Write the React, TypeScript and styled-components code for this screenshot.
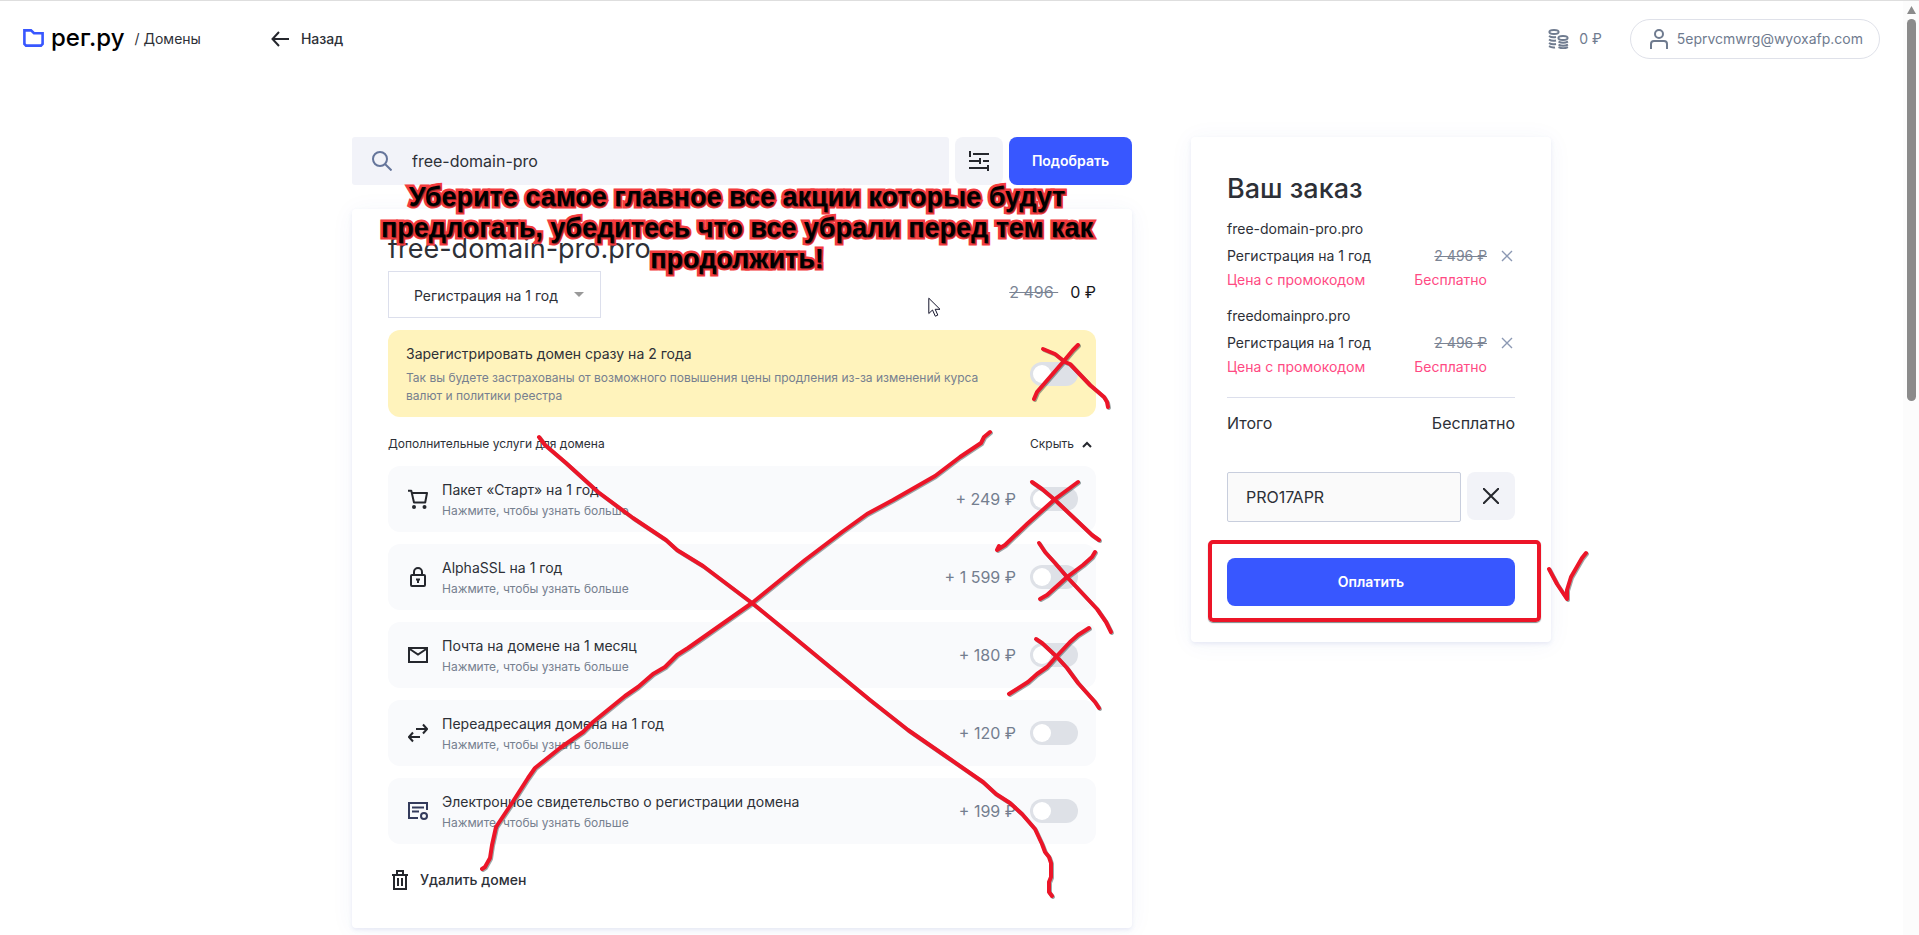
import React, { useState } from 'react';
import styled, { createGlobalStyle } from 'styled-components';

const GlobalStyle = createGlobalStyle`
  *, *::before, *::after { box-sizing: border-box; }
  body {
    margin: 0;
    background: #fff;
    color: #2d3037;
    font-family: Inter, "Liberation Sans", sans-serif;
    font-size: 14px;
    line-height: 20px;
    overflow: hidden;
  }
  h1, h2, p { margin: 0; font-weight: 400; }
  button, input, select { font: inherit; color: inherit; margin: 0; }
  button { border: 0; padding: 0; background: none; cursor: pointer; }
  a { color: inherit; text-decoration: none; }
  svg { display: block; flex: none; }
`;

const Window = styled.div`
  display: flex;
  height: 100vh;
  border-top: 1px solid #dedede;
`;
const Page = styled.div`
  flex: 1;
  min-width: 0;
  overflow: hidden;
`;
const ScrollTrack = styled.div`
  display: flex;
  flex-direction: column;
  align-items: center;
  gap: 5px;
  width: 16px;
  padding-top: 5px;
  background: #fcfcfc;
`;
const ScrollThumb = styled.div`
  width: 9px;
  height: 382px;
  border-radius: 5px;
  background: #8b8b8b;
`;

const Header = styled.header`
  display: flex;
  align-items: center;
  height: 76px;
  padding: 0 23px;
`;
const Logo = styled.a`
  display: flex;
  align-items: center;
  gap: 7px;
  padding-bottom: 2px;
  color: #000;
  font-size: 24px;
  line-height: 28px;
  font-weight: 500;
`;
const Section = styled.a`
  margin-left: 10px;
`;
const Back = styled.a`
  display: flex;
  align-items: center;
  gap: 12px;
  margin-left: 70px;
  font-weight: 500;
`;
const Balance = styled.a`
  display: flex;
  align-items: center;
  gap: 10px;
  margin-left: auto;
  color: #6f7b8f;
`;
const Account = styled.a`
  display: flex;
  align-items: center;
  gap: 8px;
  height: 40px;
  margin-left: 28px;
  padding: 0 16px 0 18px;
  border: 1px solid #dfe1e9;
  border-radius: 20px;
  color: #6f7b8f;
`;

const Content = styled.main`
  position: relative;
  display: flex;
  align-items: flex-start;
  gap: 59px;
  max-width: 1199px;
  margin: 60px auto 0;
`;
const Results = styled.div`
  flex: 1;
  min-width: 0;
`;
const Search = styled.form`
  display: flex;
  gap: 6px;
  height: 48px;
`;
const SearchField = styled.label`
  display: flex;
  flex: 1;
  align-items: center;
  gap: 20px;
  padding: 0 20px;
  border-radius: 3px;
  background: #f2f3f9;
`;
const SearchInput = styled.input`
  flex: 1;
  min-width: 0;
  padding: 0;
  border: 0;
  outline: 0;
  background: none;
  font-size: 16px;
`;
const SquareButton = styled.button`
  display: flex;
  align-items: center;
  justify-content: center;
  width: 48px;
  height: 48px;
  border-radius: 8px;
  background: #f2f3f8;
`;
const PrimaryButton = styled.button<{ $wide?: boolean }>`
  width: ${p => (p.$wide ? '100%' : '123px')};
  height: 48px;
  border-radius: 8px;
  background: #3857ff;
  color: #fff;
  font-weight: 600;
`;

const Card = styled.section`
  border-radius: 4px;
  background: #fff;
  box-shadow: 0 2px 4px rgba(55, 75, 180, 0.1), 0 2px 24px rgba(55, 75, 180, 0.05);
`;
const DomainCard = styled(Card)`
  margin-top: 24px;
  padding: 22px 36px 28px;
`;
const DomainName = styled.h1`
  font-size: 27px;
  line-height: 36px;
`;
const PeriodRow = styled.div`
  display: flex;
  align-items: center;
  justify-content: space-between;
  margin: 4px 0 12px;
`;
const PeriodField = styled.div`
  display: grid;
  align-items: center;
  width: 213px;

  & > * { grid-area: 1 / 1; }
  & > svg { justify-self: end; margin-right: 17px; pointer-events: none; }
`;
const PeriodSelect = styled.select`
  appearance: none;
  width: 100%;
  height: 47px;
  padding: 2px 40px 0 25px;
  border: 1px solid #dcdfec;
  border-radius: 0;
  background: #fff;
`;
const Price = styled.p`
  display: flex;
  gap: 12px;
  padding-bottom: 6px;
  font-size: 16px;
  color: #17181c;

  s { color: #7b8494; white-space: pre; }
`;

const Promo = styled.label`
  display: flex;
  align-items: center;
  justify-content: space-between;
  padding: 12px 18px;
  border-radius: 12px;
  background: #fff3bc;
`;
const PromoText = styled.span`
  display: grid;
  gap: 3px;
  max-width: 580px;
`;
const Title = styled.span`
  line-height: 24px;
`;
const Note = styled.span`
  color: #76808f;
  font-size: 12px;
  line-height: 18px;
`;
const Toggle = styled.input`
  appearance: none;
  flex: none;
  display: flex;
  align-items: center;
  width: 48px;
  height: 24px;
  margin: 0;
  padding: 0 3px;
  border-radius: 12px;
  background: #dee1e7;
  cursor: pointer;

  &::before {
    content: '';
    width: 18px;
    height: 18px;
    border-radius: 50%;
    background: #fff;
  }
  &:checked { justify-content: flex-end; background: #3857ff; }
`;

const ExtrasHeader = styled.div`
  display: flex;
  align-items: center;
  justify-content: space-between;
  padding: 18px 4px 13px 0;
  font-size: 12px;
  line-height: 18px;
`;
const Collapse = styled.button`
  display: flex;
  align-items: center;
  gap: 8px;
`;
const Services = styled.div`
  display: grid;
  gap: 12px;
`;
const ServiceRow = styled.label`
  display: flex;
  align-items: center;
  gap: 14px;
  height: 66px;
  padding: 0 18px 0 20px;
  border-radius: 12px;
  background: #f9fafc;
`;
const ServiceText = styled.span`
  display: grid;
  flex: 1;
`;
const ServicePrice = styled.span`
  color: #747e8f;
  font-size: 16px;
`;
const Remove = styled.button`
  display: flex;
  align-items: center;
  gap: 11px;
  margin: 26px 0 10px 3px;
  font-weight: 500;
`;

const OrderCard = styled(Card)`
  flex: none;
  width: 360px;
  padding: 36px;
`;
const OrderTitle = styled.h2`
  margin-bottom: 12px;
  font-size: 27px;
  line-height: 32px;
  font-weight: 500;
`;
const OrderItem = styled.div`
  & + & { margin-top: 12px; }
`;
const OrderDomain = styled.p`
  margin-bottom: 3px;
  line-height: 24px;
`;
const OrderLine = styled.p<{ $promo?: boolean }>`
  display: flex;
  align-items: center;
  line-height: 24px;
  color: ${p => (p.$promo ? '#ff4a83' : 'inherit')};
  padding-right: ${p => (p.$promo ? '28px' : '0')};

  & > :nth-child(2) { margin-left: auto; }
  s { color: #7b8494; }
`;
const ItemRemove = styled.button`
  margin: 0 2px 0 14px;
`;
const Total = styled.p`
  display: flex;
  justify-content: space-between;
  margin: 18px 0 36px;
  padding-top: 12px;
  border-top: 1px solid #dcdfec;
  font-size: 16px;
  line-height: 26px;
`;
const Coupon = styled.div`
  display: flex;
  gap: 6px;
  margin-bottom: 36px;
`;
const CouponInput = styled.input`
  flex: 1;
  min-width: 0;
  height: 50px;
  padding: 0 18px;
  border: 1px solid #c8cedd;
  border-radius: 2px;
  background: #fafafa;
  font-size: 16px;
`;

/* Hand-made notes laid over the checkout page */
const Ink = styled.svg`
  position: absolute;
  top: 0;
  left: 0;
  overflow: visible;
  pointer-events: none;
  filter: drop-shadow(1px 1px 0 rgba(40, 60, 60, 0.45));
`;
const Caption = styled.p`
  position: absolute;
  top: 45px;
  left: 0;
  width: 780px;
  padding: 0 24px 0 14px;
  color: #000;
  font-family: "Liberation Sans", Arial, sans-serif;
  font-size: 27px;
  line-height: 31px;
  font-weight: 700;
  text-align: center;
  -webkit-text-stroke: 5px #f33b3e;
  paint-order: stroke fill;
  stroke-linejoin: round;
  text-shadow: 1px 1px 1px rgba(0, 0, 0, 0.5);
  pointer-events: none;
`;
const Frame = styled.div`
  position: absolute;
  right: 10px;
  top: 403px;
  width: 333px;
  height: 82px;
  border: 4px solid #ec1528;
  border-radius: 5px;
  box-shadow: 0 1px 1px rgba(40, 60, 60, 0.6);
  pointer-events: none;
`;
const Pointer = styled.svg`
  position: absolute;
  left: 576px;
  top: 160px;
`;

const strokes = [
  'M539 437L545 445L566 463L598 492L633 518L666 540L677 550L703 566L752 603L790 634L870 700L908 730L947 757L983 782L996 794L1010 803L1022 814L1035 829L1042 844L1045 852L1049 857L1051 863V877L1049 882V892L1052 896',
  'M990 432L984 437L981 443L960 457L935 476L893 500L867 514L842 532L805 560L752 603L688 648L677 655L665 667L653 674L638 687L625 696L593 722L583 732L560 748L535 768L528 778L512 803L496 827L492 845L490 858L485 867L482 869',
  'M1078 345L1073 350L1063 362L1037 392L1034 399',
  'M1043 349L1055 354L1065 362L1070 364L1090 385L1104 397L1107 402L1108 407',
  'M1032 482L1042 489L1055 500L1073 517L1092 535L1099 540',
  'M1078 482L1055 499L1027 524L1005 545L997 550L999 546',
  'M1039 543L1045 552L1055 563L1067 577L1097 609L1106 622L1111 632',
  'M1095 552L1092 557L1083 565L1067 577L1047 595L1040 599',
  'M1036 639L1042 643L1057 657L1067 668L1078 683L1095 702L1099 708',
  'M1089 628L1078 635L1070 642L1055 658L1047 667L1037 674L1028 682L1009 694',
  'M1549 569L1557 584L1567 599V590L1571 577L1582 558L1586 553',
];

type IconProps = { children: React.ReactNode; w?: number; h?: number; color?: string; width?: number };
const Icon = ({ children, w = 20, h = 20, color = '#25272d', width = 2 }: IconProps) => (
  <svg width={w} height={h} viewBox={`0 0 ${w} ${h}`} fill="none" stroke={color} strokeWidth={width} aria-hidden="true">
    {children}
  </svg>
);

const services = [
  {
    name: 'Пакет «Старт» на 1 год', price: '+ 249 ₽',
    icon: (
      <Icon>
        <path d="M0 1.7H3.3L6 13.5H17.2L19 4H3.8" strokeLinejoin="round" />
        <circle cx="6" cy="18" r="2" fill="#25272d" stroke="none" />
        <circle cx="16.5" cy="18" r="2" fill="#25272d" stroke="none" />
      </Icon>
    ),
  },
  {
    name: 'AlphaSSL на 1 год', price: '+ 1 599 ₽',
    icon: (
      <Icon>
        <rect x="3" y="8" width="14" height="11" rx="1" />
        <path d="M6 8V5A4 4 0 0 1 14 5V8M8 12.5H12M10 12V16" />
      </Icon>
    ),
  },
  {
    name: 'Почта на домене на 1 месяц', price: '+ 180 ₽',
    icon: <Icon><path d="M1 3H19V17H1ZM1 3.5L10 9.5L19 3.5" /></Icon>,
  },
  {
    name: 'Переадресация домена на 1 год', price: '+ 120 ₽',
    icon: <Icon><path d="M8 6H19M15 1.5L19 6L15 10.5M12 14H1M5 9.5L1 14L5 18.5" /></Icon>,
  },
  {
    name: 'Электронное свидетельство о регистрации домена', price: '+ 199 ₽',
    icon: (
      <Icon color="#343b5c">
        <path d="M10 17H1V2H19V9M4 6.5H16M4 10.5H11" />
        <circle cx="16" cy="15" r="3" />
      </Icon>
    ),
  },
];

const orderItems = ['free-domain-pro.pro', 'freedomainpro.pro'];

export default function App() {
  const [query, setQuery] = useState('free-domain-pro');
  const [coupon, setCoupon] = useState('PRO17APR');

  return (
    <>
      <GlobalStyle />
      <Window>
        <Page>
          <Header>
            <Logo href="#">
              <Icon w={21} h={18} color="#3857ff" width={2.6}>
                <path d="M1.4 1.4H8L11 4.2H19.6V15L18 16.6H3L1.4 15Z" />
              </Icon>
              рег.ру
            </Logo>
            <Section href="#">/ Домены</Section>
            <Back href="#">
              <Icon w={18} h={16}><path d="M18 8H1.5M8 1L1.5 8L8 15" /></Icon>
              Назад
            </Back>
            <Balance href="#">
              <Icon w={21} h={20} color="#6f7b8f">
                <ellipse cx="6" cy="3" rx="4.6" ry="2" />
                <ellipse cx="15" cy="9" rx="4.6" ry="2" />
                <path d="M1 7Q4 9 8 8M1 10.5Q4 12.5 8 11.5M1 14Q4 16 8 15M1 17.2Q4 19 7 18.4M10.5 12.6Q15 15 20 12.6M10.5 15.6Q15 18 20 15.6M10.5 18.2Q15 20.4 20 18.2" />
              </Icon>
              0 ₽
            </Balance>
            <Account href="#">
              <Icon color="#6f7b8f">
                <circle cx="10" cy="5" r="4" />
                <path d="M2 20V15Q2 12 5 12H15Q18 12 18 15V20" />
              </Icon>
              5eprvcmwrg@wyoxafp.com
            </Account>
          </Header>

          <Content>
            <Results>
              <Search onSubmit={e => e.preventDefault()}>
                <SearchField>
                  <Icon color="#65759b"><circle cx="8" cy="8" r="7" /><path d="M13 13L19.5 19.5" /></Icon>
                  <SearchInput aria-label="Домен" value={query} onChange={e => setQuery(e.target.value)} />
                </SearchField>
                <SquareButton type="button" aria-label="Фильтры">
                  <Icon><path d="M1 0V6M4 3H20M0 10H11M11 7V13M14 10H20M0 17H19M19 14V20" /></Icon>
                </SquareButton>
                <PrimaryButton type="submit">Подобрать</PrimaryButton>
              </Search>

              <DomainCard>
                <DomainName>free-domain-pro.pro</DomainName>
                <PeriodRow>
                  <PeriodField>
                    <PeriodSelect aria-label="Срок регистрации">
                      <option>Регистрация на 1 год</option>
                    </PeriodSelect>
                    <svg width="10" height="5" aria-hidden="true"><path d="M0 0H10L5 5Z" fill="#999" /></svg>
                  </PeriodField>
                  <Price><s>{'2 496 '}</s><span>0 ₽</span></Price>
                </PeriodRow>

                <Promo>
                  <PromoText>
                    <Title>Зарегистрировать домен сразу на 2 года</Title>
                    <Note>Так вы будете застрахованы от возможного повышения цены продления из-за изменений курса валют и политики реестра</Note>
                  </PromoText>
                  <Toggle type="checkbox" />
                </Promo>

                <ExtrasHeader>
                  <span>Дополнительные услуги для домена</span>
                  <Collapse type="button">
                    Скрыть
                    <Icon w={10} h={7}><path d="M1 6L5 2L9 6" /></Icon>
                  </Collapse>
                </ExtrasHeader>

                <Services>
                  {services.map(s => (
                    <ServiceRow key={s.name}>
                      {s.icon}
                      <ServiceText>
                        <Title>{s.name}</Title>
                        <Note>Нажмите, чтобы узнать больше</Note>
                      </ServiceText>
                      <ServicePrice>{s.price}</ServicePrice>
                      <Toggle type="checkbox" />
                    </ServiceRow>
                  ))}
                </Services>

                <Remove type="button">
                  <Icon w={18} h={20}><path d="M1 5H17M3 5V19H15V5M6 4V1H12V4M7 8V16M11 8V16" /></Icon>
                  Удалить домен
                </Remove>
              </DomainCard>
            </Results>

            <OrderCard>
              <OrderTitle>Ваш заказ</OrderTitle>
              {orderItems.map(domain => (
                <OrderItem key={domain}>
                  <OrderDomain>{domain}</OrderDomain>
                  <OrderLine as="div">
                    <span>Регистрация на 1 год</span>
                    <s>2 496 ₽</s>
                    <ItemRemove type="button" aria-label={`Удалить ${domain}`}>
                      <Icon w={12} h={12} color="#8b98b3" width={1.4}><path d="M1 1L11 11M11 1L1 11" /></Icon>
                    </ItemRemove>
                  </OrderLine>
                  <OrderLine $promo>
                    <span>Цена с промокодом</span>
                    <span>Бесплатно</span>
                  </OrderLine>
                </OrderItem>
              ))}
              <Total><span>Итого</span><span>Бесплатно</span></Total>
              <Coupon>
                <CouponInput aria-label="Промокод" value={coupon} onChange={e => setCoupon(e.target.value)} />
                <SquareButton type="button" aria-label="Убрать промокод" onClick={() => setCoupon('')}>
                  <Icon w={16} h={16}><path d="M0 0L16 16M16 0L0 16" /></Icon>
                </SquareButton>
              </Coupon>
              <PrimaryButton type="button" $wide>Оплатить</PrimaryButton>
            </OrderCard>

            <Caption>
              Уберите самое главное все акции которые будут предлогать, убедитесь что все убрали перед тем как продолжить!
            </Caption>
            <Frame />
            <Ink width="1199" height="791" viewBox="352 137 1199 791" fill="none" stroke="#ec1528" strokeWidth="4" strokeLinecap="round" strokeLinejoin="round" aria-hidden="true">
              {strokes.map(d => <path key={d} d={d} />)}
            </Ink>
            <Pointer width="14" height="21" viewBox="0 0 14 21" aria-hidden="true">
              <path d="M.8 1.2V16.5L4.5 13L7.3 19.2L9.8 18.1L7.2 12.3H12Z" fill="#fff" stroke="#14142b" />
            </Pointer>
          </Content>
        </Page>
        <ScrollTrack aria-hidden="true">
          <svg width="9" height="8"><path d="M4.5 0L9 8H0Z" fill="#8b8b8b" /></svg>
          <ScrollThumb />
        </ScrollTrack>
      </Window>
    </>
  );
}
